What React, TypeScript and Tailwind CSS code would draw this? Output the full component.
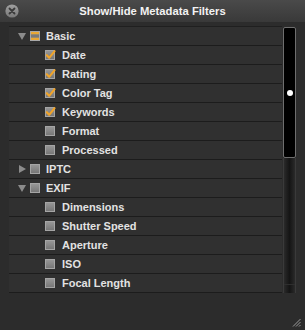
import React from "react";

type State = "on" | "off" | "mixed";

function Box({ state }: { state: State }) {
  if (state === "mixed") {
    return (
      <svg width="10" height="10" viewBox="0 0 10 10" className="shrink-0 block">
        <rect x="0" y="0" width="10" height="10" fill="#8a8a8a" />
        <rect x="0.5" y="0.5" width="9" height="9" fill="none" stroke="#a8a8a8" />
        <rect x="1" y="1" width="8" height="2.5" fill="#e8a735" />
        <rect x="1" y="6.5" width="8" height="2.5" fill="#e8a735" />
        <rect x="1" y="3.5" width="8" height="3" fill="#7a7a7a" />
      </svg>
    );
  }
  return (
    <svg width="10" height="10" viewBox="0 0 10 10" className="shrink-0 block overflow-visible">
      <defs>
        <linearGradient id="cbg" x1="0" y1="0" x2="0" y2="1">
          <stop offset="0" stopColor="#9a9a9a" />
          <stop offset="1" stopColor="#737373" />
        </linearGradient>
      </defs>
      <rect x="0" y="0" width="10" height="10" fill="url(#cbg)" />
      <rect x="0.5" y="0.5" width="9" height="9" fill="none" stroke="#a5a5a5" />
      {state === "on" && (
        <path d="M1.8 5.2 L4.2 7.8 L9.6 1.2" fill="none" stroke="#f0a42a" strokeWidth="2.1" strokeLinecap="round" strokeLinejoin="round" />
      )}
    </svg>
  );
}

function Tri({ open }: { open: boolean }) {
  return open ? (
    <svg width="8" height="7" viewBox="0 0 8 7" className="shrink-0 block">
      <path d="M0 0 L8 0 L4 7 Z" fill="#8c8c8c" />
    </svg>
  ) : (
    <svg width="8" height="8" viewBox="0 0 8 8" className="shrink-0 block">
      <path d="M1 0 L8 4 L1 8 Z" fill="#8c8c8c" />
    </svg>
  );
}

type Row =
  | { kind: "group"; label: string; open: boolean; state: State }
  | { kind: "item"; label: string; state: State };

const rows: Row[] = [
  { kind: "group", label: "Basic", open: true, state: "mixed" },
  { kind: "item", label: "Date", state: "on" },
  { kind: "item", label: "Rating", state: "on" },
  { kind: "item", label: "Color Tag", state: "on" },
  { kind: "item", label: "Keywords", state: "on" },
  { kind: "item", label: "Format", state: "off" },
  { kind: "item", label: "Processed", state: "off" },
  { kind: "group", label: "IPTC", open: false, state: "off" },
  { kind: "group", label: "EXIF", open: true, state: "off" },
  { kind: "item", label: "Dimensions", state: "off" },
  { kind: "item", label: "Shutter Speed", state: "off" },
  { kind: "item", label: "Aperture", state: "off" },
  { kind: "item", label: "ISO", state: "off" },
  { kind: "item", label: "Focal Length", state: "off" },
];

export default function App() {
  return (
    <div
      className="w-[305px] h-[330px] flex flex-col bg-[#2c2c2c] overflow-hidden"
      style={{ fontFamily: '"Liberation Sans", Arial, sans-serif' }}
    >
      {/* Title bar */}
      <div className="h-[22px] flex items-center bg-gradient-to-b from-[#4a4a4a] to-[#393939] shrink-0">
        <div className="w-[19px] pl-[5px] flex items-center">
          <svg width="14" height="14" viewBox="0 0 14 14" className="block">
            <defs>
              <linearGradient id="cl" x1="0" y1="0" x2="0" y2="1">
                <stop offset="0" stopColor="#a0a0a0" />
                <stop offset="1" stopColor="#7a7a7a" />
              </linearGradient>
            </defs>
            <circle cx="7" cy="7" r="6.6" fill="url(#cl)" />
            <path d="M4.5 4.5 L9.5 9.5 M9.5 4.5 L4.5 9.5" stroke="#3a3a3a" strokeWidth="1.8" strokeLinecap="round" />
          </svg>
        </div>
        <div className="flex-1 text-center text-[11.25px] font-bold text-[#f2f2f2] leading-none pt-px">
          Show/Hide Metadata Filters
        </div>
        <div className="w-[19px]" />
      </div>

      {/* Body */}
      <div className="flex pl-[9px] pt-[4px] pr-[9px]">
        <div className="w-[273px] border-t border-[#1f1f1f]">
          {rows.map((r, i) => (
            <div
              key={i}
              className="h-[19px] border-b border-[#1c1c1c] bg-[#303030] flex items-center text-[11px] font-bold text-[#e2e2e2]"
            >
              {r.kind === "group" ? (
                <>
                  <div className="w-[21px] pl-[9px] flex items-center">
                    <Tri open={r.open} />
                  </div>
                  <Box state={r.state} />
                  <span className="ml-[6px] leading-none">{r.label}</span>
                </>
              ) : (
                <>
                  <div className="w-[36px]" />
                  <Box state={r.state} />
                  <span className="ml-[7px] leading-none">{r.label}</span>
                </>
              )}
            </div>
          ))}
        </div>
        <div className="ml-px mt-px w-[13px] h-[266px] flex flex-col">
          <div className="h-[131px] bg-black border border-[#6e6e6e] rounded-[2px] flex items-center justify-center">
            <div className="w-[6px] h-[6px] rounded-full bg-white" />
          </div>
          <div className="flex-1 border-x border-[#3a3a3a] bg-gradient-to-r from-[#2a2a2a] via-[#151515] to-[#2a2a2a] flex flex-col justify-end">
            <div className="h-px bg-[#2e2e2e] mb-[8px]" />
          </div>
        </div>
      </div>

      <div className="flex-1 flex items-end justify-end pr-[4px] pb-[3px]">
        <svg width="9" height="9" viewBox="0 0 9 9" className="block">
          <path d="M8.5 1 L1 8.5 M8.5 4 L4 8.5 M8.5 7 L7 8.5" stroke="#9a9a9a" strokeWidth="1" />
        </svg>
      </div>
    </div>
  );
}
